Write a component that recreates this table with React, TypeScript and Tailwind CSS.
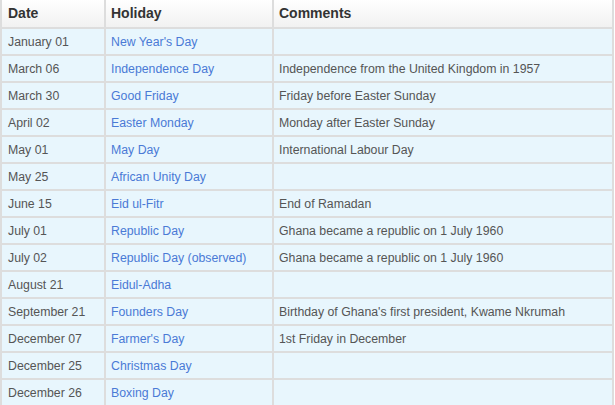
import React from "react";

const rows: [string, string, string][] = [
  ["January 01", "New Year's Day", ""],
  ["March 06", "Independence Day", "Independence from the United Kingdom in 1957"],
  ["March 30", "Good Friday", "Friday before Easter Sunday"],
  ["April 02", "Easter Monday", "Monday after Easter Sunday"],
  ["May 01", "May Day", "International Labour Day"],
  ["May 25", "African Unity Day", ""],
  ["June 15", "Eid ul-Fitr", "End of Ramadan"],
  ["July 01", "Republic Day", "Ghana became a republic on 1 July 1960"],
  ["July 02", "Republic Day (observed)", "Ghana became a republic on 1 July 1960"],
  ["August 21", "Eidul-Adha", ""],
  ["September 21", "Founders Day", "Birthday of Ghana's first president, Kwame Nkrumah"],
  ["December 07", "Farmer's Day", "1st Friday in December"],
  ["December 25", "Christmas Day", ""],
  ["December 26", "Boxing Day", ""],
];

export default function App() {
  return (
    <div
      className="w-[615px] h-[405px] overflow-hidden bg-white"
      style={{ fontFamily: '"Liberation Sans", Arial, sans-serif' }}
    >
      <div className="w-[614px] border-l-2 border-r-2 border-[#dddddd]">
        <div className="flex h-[29px] border-b-2 border-[#dddddd] bg-gradient-to-b from-white to-[#f1f1f1] text-[14px] font-bold text-[#333333]">
          <div className="w-[104px] shrink-0 border-r-2 border-[#dddddd] flex items-center pl-[6px]">Date</div>
          <div className="w-[168px] shrink-0 border-r-2 border-[#dddddd] flex items-center pl-[5px]">Holiday</div>
          <div className="flex-1 flex items-center pl-[5px]">Comments</div>
        </div>
        {rows.map(([d, h, c]) => (
          <div
            key={d}
            className="flex h-[27px] border-b-2 border-[#dddddd] bg-[#e8f6fd] text-[12.3px]"
          >
            <div className="w-[104px] shrink-0 border-r-2 border-[#dddddd] flex items-center pl-[6px] pt-px text-[#555555]">{d}</div>
            <div className="w-[168px] shrink-0 border-r-2 border-[#dddddd] flex items-center pl-[5px] pt-px text-[#4a7ad6]">{h}</div>
            <div className="flex-1 flex items-center pl-[5px] pt-px text-[#555555]">{c}</div>
          </div>
        ))}
      </div>
    </div>
  );
}
